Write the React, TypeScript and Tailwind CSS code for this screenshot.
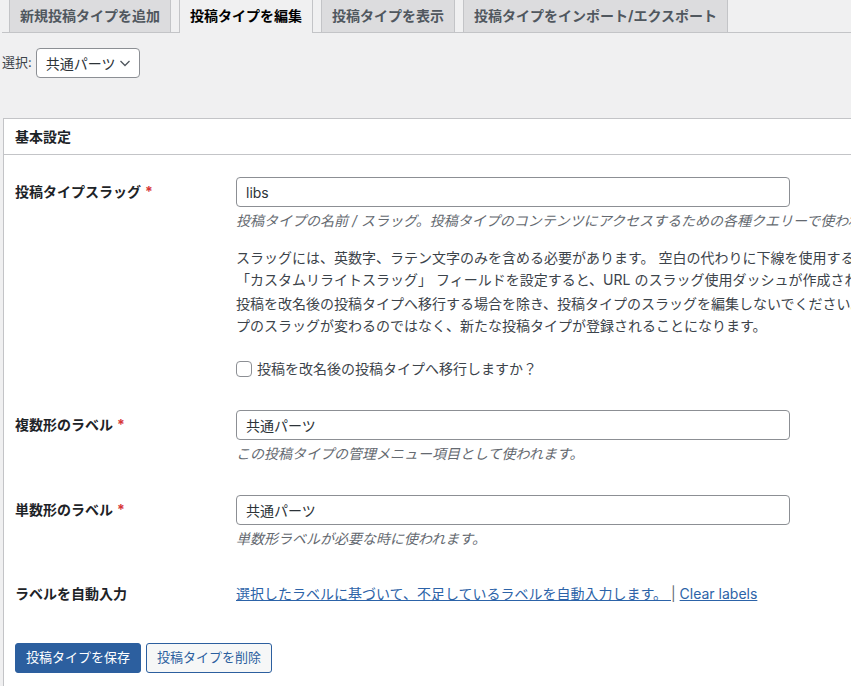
import React from "react";

const font = { fontFamily: 'Inter, "Noto Sans CJK JP", sans-serif' };

const tabs = [
  { label: "新規投稿タイプを追加", active: false },
  { label: "投稿タイプを編集", active: true },
  { label: "投稿タイプを表示", active: false },
  { label: "投稿タイプをインポート/エクスポート", active: false },
];

function Required() {
  return <span className="ml-1 text-[#d63638]">*</span>;
}

function TextInput({ value }: { value: string }) {
  return (
    <div className="flex h-[30px] w-[554px] items-center rounded-[4px] border border-[#8c8f94] bg-white px-[9px] text-[14px] text-[#2c3338]">
      {value}
    </div>
  );
}

function Desc({ children }: { children: React.ReactNode }) {
  return <div className="mt-[4px] whitespace-nowrap text-[14px] leading-[20px] italic text-[#646970]">{children}</div>;
}

export default function App() {
  return (
    <div className="min-h-[686px] overflow-hidden bg-[#f0f0f1] text-[#1d2327]" style={font}>
      {/* tabs */}
      <div className="ml-[2px] flex h-[33px] items-end gap-2 border-b border-[#c3c4c7] pl-[7px]">
        {tabs.map((t) => (
          <div
            key={t.label}
            className={
              t.active
                ? "-mb-px flex h-[33px] items-center border-x border-[#c3c4c7] bg-[#f0f0f1] px-[10px] pb-[3px] text-[14px] font-bold whitespace-nowrap text-black"
                : "flex h-[32px] items-center border-x border-[#c3c4c7] bg-[#dcdcde] px-[10px] pb-[2px] text-[14px] font-bold whitespace-nowrap text-[#50575e]"
            }
          >
            {t.label}
          </div>
        ))}
      </div>

      {/* selector */}
      <div className="mt-[15px] flex items-center gap-1 pl-[2px]">
        <span className="text-[13px] text-[#3c434a]">選択:</span>
        <div className="flex h-[30px] w-[104px] items-center justify-between rounded-[4px] border border-[#8c8f94] bg-white pl-[9px] pr-[8px] text-[14px] text-[#2c3338]">
          <span>共通パーツ</span>
          <svg width="12" height="12" viewBox="0 0 12 12" fill="none" stroke="#50575e" strokeWidth="1.3">
            <path d="M1.5 4l4.5 4.5L10.5 4" />
          </svg>
        </div>
      </div>

      {/* panel */}
      <div className="mt-[40px] ml-[3px] min-h-[568px] border border-r-0 border-b-0 border-[#c3c4c7] bg-white">
        <div className="flex h-[36px] items-center border-b border-[#c3c4c7] pl-[11px] text-[14px] font-bold">基本設定</div>

        <div className="pl-[11px]">
          {/* slug */}
          <div className="flex pt-[22px]">
            <div className="w-[221px] shrink-0 text-[14px] leading-[30px] font-bold">
              投稿タイプスラッグ<Required />
            </div>
            <div>
              <TextInput value="libs" />
              <Desc>投稿タイプの名前 / スラッグ。投稿タイプのコンテンツにアクセスするための各種クエリーで使われます。</Desc>
              <div className="mt-[16px] whitespace-nowrap text-[14px] leading-[22px] text-[#3c434a]">
                <p>スラッグには、英数字、ラテン文字のみを含める必要があります。 空白の代わりに下線を使用するか、</p>
                <p>「カスタムリライトスラッグ」 フィールドを設定すると、URL のスラッグ使用ダッシュが作成されます。</p>
                <p className="mt-[2px]">投稿を改名後の投稿タイプへ移行する場合を除き、投稿タイプのスラッグを編集しないでください。投稿タイ</p>
                <p>プのスラッグが変わるのではなく、新たな投稿タイプが登録されることになります。</p>
              </div>
              <label className="mt-[21px] flex items-center gap-[5px] text-[14px] leading-[22px] text-[#3c434a]">
                <span className="inline-block h-[16px] w-[16px] rounded-[4px] border border-[#8c8f94] bg-white" />
                投稿を改名後の投稿タイプへ移行しますか？
              </label>
            </div>
          </div>

          {/* plural */}
          <div className="flex pt-[30px]">
            <div className="w-[221px] shrink-0 text-[14px] leading-[30px] font-bold">
              複数形のラベル<Required />
            </div>
            <div>
              <TextInput value="共通パーツ" />
              <Desc>この投稿タイプの管理メニュー項目として使われます。</Desc>
            </div>
          </div>

          {/* singular */}
          <div className="flex pt-[31px]">
            <div className="w-[221px] shrink-0 text-[14px] leading-[30px] font-bold">
              単数形のラベル<Required />
            </div>
            <div>
              <TextInput value="共通パーツ" />
              <Desc>単数形ラベルが必要な時に使われます。</Desc>
            </div>
          </div>

          {/* auto fill */}
          <div className="flex pt-[34px] text-[14px] leading-[22px]">
            <div className="w-[221px] shrink-0 font-bold">ラベルを自動入力</div>
            <div className="whitespace-nowrap">
              <a href="#" className="text-[#2c63a8] underline">選択したラベルに基づいて、不足しているラベルを自動入力します。 </a>
              <span className="text-[#646970]"> | </span>
              <a href="#" className="text-[#2c63a8] underline">Clear labels</a>
            </div>
          </div>

          {/* buttons */}
          <div className="mt-[38px] flex gap-[5px]">
            <button className="h-[30px] rounded-[3px] border border-[#2c5f9f] bg-[#2c5f9f] px-[10px] text-[13px] text-white">投稿タイプを保存</button>
            <button className="h-[30px] rounded-[3px] border border-[#2c5f9f] bg-[#f6f7f7] px-[10px] text-[13px] text-[#2c5f9f]">投稿タイプを削除</button>
          </div>
        </div>
      </div>
    </div>
  );
}
